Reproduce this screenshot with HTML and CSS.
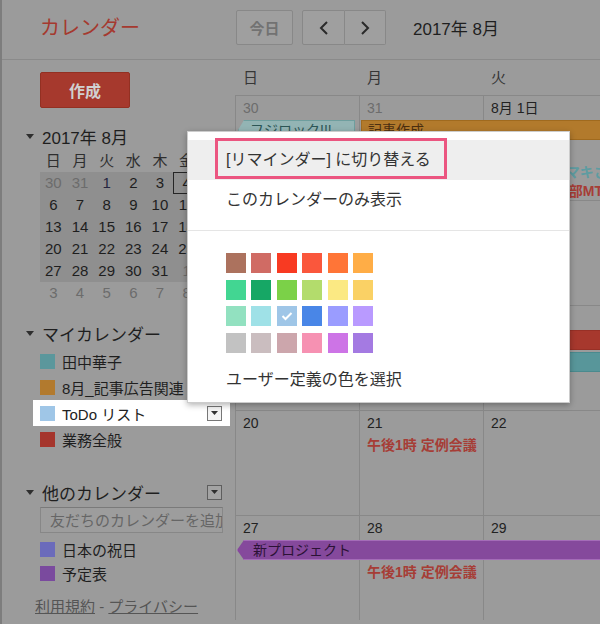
FILE: index.html
```html
<!DOCTYPE html>
<html lang="ja">
<head>
<meta charset="utf-8">
<title>カレンダー</title>
<link rel="stylesheet" href="styles.css">
</head>
<body>
<div class="app">
  <header class="topbar">
    <div class="brand">カレンダー</div>
    <div class="toolbar">
      <button class="btn btn-today">今日</button>
      <div class="btn-group">
        <button class="btn btn-nav"><svg width="10" height="16" viewBox="0 0 10 16"><polyline points="8,2 2,8 8,14" fill="none" stroke="#2a2a2a" stroke-width="2"/></svg></button>
        <button class="btn btn-nav"><svg width="10" height="16" viewBox="0 0 10 16"><polyline points="2,2 8,8 2,14" fill="none" stroke="#2a2a2a" stroke-width="2"/></svg></button>
      </div>
      <div class="period">2017年 8月</div>
    </div>
  </header>

  <div class="content">
    <aside class="sidebar">
      <button class="create">作成</button>

      <div class="sec-head mini-head">
        <svg class="tri" width="8" height="5" viewBox="0 0 8 5"><polygon points="0,0 8,0 4,5" fill="#2e2e2e"/></svg>
        <span>2017年 8月</span>
      </div>
      <div class="mini-cal">
        <span class="wd">日</span><span class="wd">月</span><span class="wd">火</span><span class="wd">水</span><span class="wd">木</span><span class="wd">金</span><span class="wd">土</span>
        <span class="cur o">30</span><span class="cur o">31</span><span class="cur first">1</span><span class="cur">2</span><span class="cur">3</span><span class="cur today">4</span><span class="cur">5</span>
        <span class="cur">6</span><span class="cur">7</span><span class="cur">8</span><span class="cur">9</span><span class="cur">10</span><span class="cur">11</span><span class="cur">12</span>
        <span class="cur">13</span><span class="cur">14</span><span class="cur">15</span><span class="cur">16</span><span class="cur">17</span><span class="cur">18</span><span class="cur">19</span>
        <span class="cur">20</span><span class="cur">21</span><span class="cur">22</span><span class="cur">23</span><span class="cur">24</span><span class="cur">25</span><span class="cur">26</span>
        <span class="cur">27</span><span class="cur">28</span><span class="cur">29</span><span class="cur">30</span><span class="cur">31</span><span class="cur o">1</span><span class="cur o">2</span>
        <span class="o">3</span><span class="o">4</span><span class="o">5</span><span class="o">6</span><span class="o">7</span><span class="o">8</span><span class="o">9</span>
      </div>

      <div class="sec-head mycal-head">
        <svg class="tri" width="8" height="5" viewBox="0 0 8 5"><polygon points="0,0 8,0 4,5" fill="#2e2e2e"/></svg>
        <span>マイカレンダー</span>
      </div>
      <ul class="cal-list">
        <li class="cal-item"><span class="sq sq-tanaka"></span>田中華子</li>
        <li class="cal-item"><span class="sq sq-ad"></span>8月_記事広告関連</li>
        <li class="cal-item active"><span class="sq sq-todo"></span>ToDo リスト<span class="dd dd-light"><svg width="7" height="4" viewBox="0 0 7 4"><polygon points="0,0 7,0 3.5,4" fill="#333"/></svg></span></li>
        <li class="cal-item"><span class="sq sq-work"></span>業務全般</li>
      </ul>

      <div class="sec-head other-head">
        <svg class="tri" width="8" height="5" viewBox="0 0 8 5"><polygon points="0,0 8,0 4,5" fill="#2e2e2e"/></svg>
        <span>他のカレンダー</span>
        <span class="dd"><svg width="7" height="4" viewBox="0 0 7 4"><polygon points="0,0 7,0 3.5,4" fill="#2e2e2e"/></svg></span>
      </div>
      <input class="friend-input" type="text" placeholder="友だちのカレンダーを追加">
      <ul class="cal-list other-list">
        <li class="cal-item sm"><span class="sq sq-holiday"></span>日本の祝日</li>
        <li class="cal-item sm"><span class="sq sq-plan"></span>予定表</li>
      </ul>

      <div class="footer"><a href="#">利用規約</a> - <a href="#">プライバシー</a></div>
    </aside>

    <main class="month">
      <div class="dow"><span>日</span><span>月</span><span>火</span></div>

      <div class="week">
        <div class="day c1 o">30</div>
        <div class="day c2 o">31</div>
        <div class="day c3">8月 1日</div>
        <div class="bar bar-fuji">フジロック!!!</div>
        <div class="bar bar-kiji">記事作成</div>
        <div class="ev ev-teal c3 r4">午前11時半 マキさん</div>
        <div class="ev c3 r5">午後4時編集部MTG</div>
      </div>

      <div class="week">
        <div class="day c1"></div>
        <div class="day c2"></div>
        <div class="day c3"></div>
      </div>

      <div class="week">
        <div class="day c1"></div>
        <div class="day c2"></div>
        <div class="day c3"></div>
        <div class="bar bar-red">業務全般</div>
        <div class="bar bar-teal">田中華子</div>
      </div>

      <div class="week">
        <div class="day c1">20</div>
        <div class="day c2">21</div>
        <div class="day c3">22</div>
        <div class="ev c2 r2">午後1時 定例会議</div>
      </div>

      <div class="week">
        <div class="day c1">27</div>
        <div class="day c2">28</div>
        <div class="day c3">29</div>
        <div class="bar bar-proj">新プロジェクト</div>
        <div class="ev c2 r3">午後1時 定例会議</div>
      </div>
    </main>
  </div>

  <div class="popup">
    <div class="menu-item hl">[リマインダー] に切り替える</div>
    <div class="menu-item">このカレンダーのみ表示</div>
    <div class="sep"></div>
    <div class="swatches">
      <span class="sw" style="background:#ac725e"></span>
      <span class="sw" style="background:#d06b64"></span>
      <span class="sw" style="background:#f83a22"></span>
      <span class="sw" style="background:#fa573c"></span>
      <span class="sw" style="background:#ff7537"></span>
      <span class="sw" style="background:#ffad46"></span>
      <span class="sw" style="background:#42d692"></span>
      <span class="sw" style="background:#16a765"></span>
      <span class="sw" style="background:#7bd148"></span>
      <span class="sw" style="background:#b3dc6c"></span>
      <span class="sw" style="background:#fbe983"></span>
      <span class="sw" style="background:#fad165"></span>
      <span class="sw" style="background:#92e1c0"></span>
      <span class="sw" style="background:#9fe1e7"></span>
      <span class="sw sel" style="background:#9fc6e7"><svg width="12" height="10" viewBox="0 0 12 10"><polyline points="1.5,5 4.5,8 10.5,2" fill="none" stroke="#fff" stroke-width="2"/></svg></span>
      <span class="sw" style="background:#4986e7"></span>
      <span class="sw" style="background:#9a9cff"></span>
      <span class="sw" style="background:#b99aff"></span>
      <span class="sw" style="background:#c2c2c2"></span>
      <span class="sw" style="background:#cabdbf"></span>
      <span class="sw" style="background:#cca6ac"></span>
      <span class="sw" style="background:#f691b2"></span>
      <span class="sw" style="background:#cd74e6"></span>
      <span class="sw" style="background:#a47ae2"></span>
    </div>
    <div class="custom">ユーザー定義の色を選択</div>
    <div class="annot"></div>
  </div>
</div>
</body>
</html>
```

FILE: styles.css
```css
html, body {
  margin: 0;
  padding: 0;
}

body {
  width: 600px;
  height: 624px;
  overflow: hidden;
  font-family: "Liberation Sans", "Noto Sans CJK JP", sans-serif;
  background: #9b9b9b;
}

.app {
  position: relative;
  width: 598px;
  height: 624px;
  border-left: 2px solid #7d7d7d;
  background: #9b9b9b;
  color: #222;
  overflow: hidden;
}

/* ---------- top bar ---------- */
.topbar {
  display: flex;
  height: 59px;
  border-bottom: 1px solid #8a8a8a;
}

.brand {
  width: 233px;
  flex: none;
  box-sizing: border-box;
  padding: 16px 0 0 38px;
  font-size: 20px;
  line-height: 24px;
  color: #a5392f;
}

.toolbar {
  display: flex;
  align-items: center;
  height: 35px;
  margin-top: 10px;
}

.btn {
  font-family: inherit;
  background: #9f9f9f;
  border: 1px solid #888;
  border-radius: 2px;
  padding: 0;
  margin: 0;
  height: 35px;
  box-sizing: border-box;
}

.btn-today {
  margin-left: 1px;
  width: 57px;
  font-size: 15px;
  font-weight: bold;
  color: #727272;
}

.btn-group {
  display: flex;
  margin-left: 9px;
}

.btn-nav {
  width: 43px;
  display: flex;
  align-items: center;
  justify-content: center;
}

.btn-group .btn-nav:first-child {
  border-radius: 2px 0 0 2px;
}

.btn-group .btn-nav:last-child {
  width: 41px;
  border-left: none;
  border-radius: 0 2px 2px 0;
}

.period {
  margin-left: 27px;
  font-size: 17px;
  color: #1f1f1f;
}

/* ---------- layout ---------- */
.content {
  display: flex;
  height: 564px;
}

.sidebar {
  width: 233px;
  flex: none;
}

/* ---------- sidebar ---------- */
.create {
  display: block;
  margin: 12px 0 0 38px;
  width: 90px;
  height: 36px;
  background: #a6392d;
  border: 1px solid #933022;
  border-radius: 2px;
  color: #d0d0d0;
  font-family: inherit;
  font-size: 16px;
  font-weight: bold;
  padding: 0;
}

.sec-head {
  display: flex;
  align-items: center;
  width: 220px;
  height: 20px;
  box-sizing: border-box;
  padding-left: 24px;
  font-size: 17px;
  color: #1f1f1f;
  white-space: nowrap;
}

.tri {
  flex: none;
  margin-right: 8px;
}

.mini-head {
  margin-top: 18px;
}

.mini-cal {
  display: grid;
  grid-template-columns: repeat(7, 26.67px);
  grid-auto-rows: 22px;
  margin: 4px 0 0 38px;
  font-size: 15px;
  line-height: 22px;
  text-align: center;
  color: #1e1e1e;
}

.mini-cal .wd {
  color: #2e2e2e;
}

.mini-cal .cur {
  background: #8f8f8f;
}

.mini-cal .o {
  color: #6c6c6c;
}

.mini-cal .first {
  color: #262640;
}

.mini-cal .today {
  box-shadow: inset 0 0 0 1px #262626;
}

.mycal-head {
  margin-top: 19px;
}

.cal-list {
  list-style: none;
  margin: 5px 0 0;
  padding: 0;
}

.cal-item {
  display: flex;
  align-items: center;
  gap: 7px;
  height: 26px;
  width: 197px;
  margin-left: 31px;
  box-sizing: border-box;
  padding: 0 8px 0 7px;
  font-size: 15px;
  color: #1f1f1f;
  white-space: nowrap;
}

.cal-item.active {
  background: #fff;
  color: #222;
}

.cal-item.sm {
  height: 24px;
}

.sq {
  width: 15px;
  height: 15px;
  flex: none;
}

.sq-tanaka { background: #5b979c; }
.sq-ad { background: #b27a2e; }
.sq-todo { background: #9fc6e7; }
.sq-work { background: #a5352c; }
.sq-holiday { background: #6b6bbb; }
.sq-plan { background: #7a4a9e; }

.dd {
  margin-left: auto;
  width: 15px;
  height: 15px;
  flex: none;
  box-sizing: border-box;
  border: 1px solid #5e5e5e;
  background: #a3a3a3;
  display: flex;
  align-items: center;
  justify-content: center;
}

.dd-light {
  background: #f4f4f4;
  border-color: #777;
}

.other-head {
  margin-top: 30px;
}

.friend-input {
  display: block;
  margin: 5px 0 0 38px;
  width: 183px;
  height: 26px;
  box-sizing: border-box;
  border: 1px solid #878787;
  border-top-color: #7a7a7a;
  background: #9d9d9d;
  font-family: inherit;
  font-size: 15px;
  padding: 0 0 0 9px;
  color: #666;
  outline: none;
}

.friend-input::placeholder {
  color: #666;
}

.other-list {
  margin-top: 4px;
}

.footer {
  margin: 12px 0 0 33px;
  font-size: 15px;
  line-height: 20px;
  color: #555;
  white-space: nowrap;
}

.footer a {
  color: #555;
  text-decoration: underline;
}

/* ---------- month grid ---------- */
.month {
  flex: 1;
  min-width: 0;
  overflow: hidden;
}

.dow {
  display: grid;
  grid-template-columns: repeat(3, 124px);
  height: 35px;
  line-height: 35px;
  font-size: 15px;
  color: #363636;
}

.dow span {
  padding-left: 8px;
}

.week {
  display: grid;
  grid-template-columns: repeat(3, 124px);
  grid-template-rows: 24px 22px 22px 22px 14px;
  border-top: 1px solid #888;
}

.day {
  grid-row: 1 / -1;
  border-left: 1px solid #888;
  padding: 4px 0 0 7px;
  font-size: 14px;
  line-height: 16px;
  color: #222;
}

.day.o {
  color: #6d6d6d;
}

.c1 { grid-column: 1; }
.c2 { grid-column: 2; }
.c3 { grid-column: 3; }
.r2 { grid-row: 2; }
.r3 { grid-row: 3; }
.r4 { grid-row: 4; }
.r5 { grid-row: 5; }

.bar {
  grid-row: 2;
  height: 20px;
  box-sizing: border-box;
  border: 1px solid;
  font-size: 14px;
  line-height: 18px;
  white-space: nowrap;
  overflow: hidden;
}

.bar-fuji {
  grid-column: 1;
  margin: 0 4px 0 3px;
  padding-left: 11px;
  background: #93b4b4;
  border-color: #6e9e9e;
  color: #2d5656;
  clip-path: polygon(6px 0, 100% 0, 100% 100%, 6px 100%, 0 50%);
}

.bar-kiji {
  grid-column: 2 / 4;
  margin-left: 2px;
  padding-left: 6px;
  background: #b27a2c;
  border-color: #a06a1e;
  color: #4a2e10;
}

.bar-red {
  grid-column: 3;
  grid-row: 2;
  margin-left: 3px;
  padding-left: 6px;
  background: #a7382d;
  border-color: #983026;
  color: #ddd;
}

.bar-teal {
  grid-column: 3;
  grid-row: 3;
  margin-left: 3px;
  padding-left: 6px;
  background: #58969a;
  border-color: #4a8a8e;
  color: #1d3a3c;
}

.bar-proj {
  grid-column: 1 / 4;
  margin-left: 2px;
  padding-left: 15px;
  background: #85499c;
  border-color: #a46cb8;
  color: #2c1236;
  clip-path: polygon(7px 0, 100% 0, 100% 100%, 7px 100%, 0 50%);
}

.ev {
  font-size: 14px;
  font-weight: bold;
  line-height: 20px;
  white-space: nowrap;
  overflow: hidden;
  padding-left: 8px;
  color: #a63d36;
}

.ev-teal {
  color: #5e9ca1;
  margin-top: -2px;
}

.ev.r5 {
  margin-top: -5px;
}

/* ---------- popup menu ---------- */
.popup {
  position: absolute;
  left: 185px;
  top: 131px;
  width: 383px;
  height: 272px;
  box-sizing: border-box;
  background: #fff;
  border: 1px solid rgba(0, 0, 0, 0.2);
  box-shadow: 0 2px 6px rgba(0, 0, 0, 0.3);
  padding-top: 8px;
}

.menu-item {
  height: 40px;
  line-height: 40px;
  padding-left: 38px;
  font-size: 16px;
  color: #333;
  white-space: nowrap;
}

.menu-item.hl {
  background: #eee;
}

.sep {
  height: 1px;
  background: #e5e5e5;
  margin-top: 10px;
}

.swatches {
  display: grid;
  grid-template-columns: repeat(6, 20px);
  grid-auto-rows: 20px;
  column-gap: 5.4px;
  row-gap: 6.7px;
  margin: 22px 0 0 38px;
}

.sw {
  display: flex;
  align-items: center;
  justify-content: center;
}

.custom {
  margin-top: 17px;
  line-height: 20px;
  padding-left: 38px;
  font-size: 16px;
  color: #333;
}

.annot {
  position: absolute;
  left: 27px;
  top: 6px;
  width: 232px;
  height: 41px;
  box-sizing: border-box;
  border: 3px solid #eb5580;
}
```
